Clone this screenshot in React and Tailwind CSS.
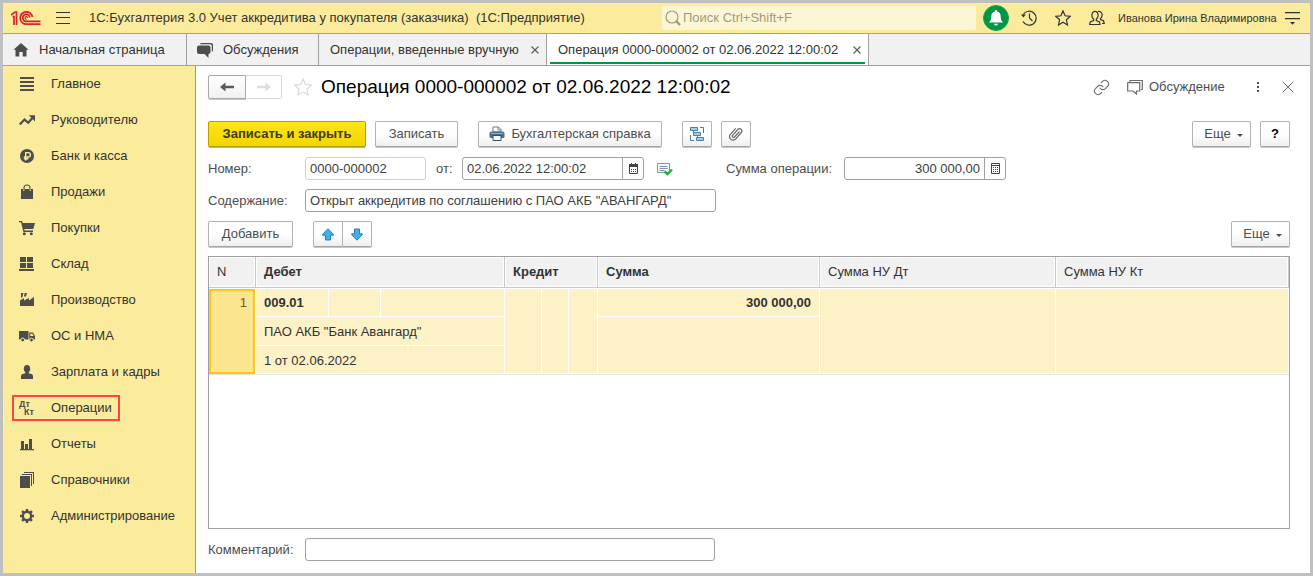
import { Link } from 'lucide-react';

const sections = [
  { name: 'Главное', icon: 'menu' },
  { name: 'Руководителю', icon: 'trend' },
  { name: 'Банк и касса', icon: 'ruble' },
  { name: 'Продажи', icon: 'bag' },
  { name: 'Покупки', icon: 'cart' },
  { name: 'Склад', icon: 'stock' },
  { name: 'Производство', icon: 'factory' },
  { name: 'ОС и НМА', icon: 'truck' },
  { name: 'Зарплата и кадры', icon: 'person' },
  { name: 'Операции', icon: 'dtkt', marked: true },
  { name: 'Отчеты', icon: 'chart' },
  { name: 'Справочники', icon: 'books' },
  { name: 'Администрирование', icon: 'gear' },
];

const gearTeeth = [0, 45, 90, 135, 180, 225, 270, 315];

const sectionIcons = {
  menu: <path d="M1 1h14v2H1zM1 5h14v2H1zM1 9h14v2H1zM1 13h14v2H1z" />,
  trend: (
    <>
      <path d="M.8 12.5 5.5 7.6l3.7 3.2 4-4.6" fill="none" stroke="currentColor" strokeWidth="2.2" />
      <path d="M9.8 3.3H16v6.2z" />
    </>
  ),
  ruble: (
    <>
      <circle cx="8" cy="8" r="7" />
      <path d="M6.7 12.4V4.6h2.5a2.2 2.2 0 0 1 0 4.4H4.8M4.8 10.8h4.6" fill="none" stroke="#faec9c" strokeWidth="1.4" />
    </>
  ),
  bag: (
    <>
      <path d="M2 5h2v2h1.5V5h5v2H12V5h2v10H2z" />
      <path d="M5 6.5V4a3 3 0 0 1 6 0v2.5" fill="none" stroke="currentColor" strokeWidth="1.1" />
    </>
  ),
  cart: (
    <>
      <path d="M0 1h3l.7 2H16l-1.7 6H5.3l.3 1.5H14V12H4.4L2 2.3H0z" />
      <circle cx="5.3" cy="13.7" r="1.5" />
      <circle cx="12.3" cy="13.7" r="1.5" />
    </>
  ),
  stock: <path d="M1 1h6v5H1zM8 1h6v5H8zM1 7h6v5H1zM8 7h6v5H8zM0 13h15v2H0z" />,
  factory: <path d="M1 14V8.5l4-2.500v2.500L10 6v2.500L15 5v9zM2 1h2.400L3.500 5 2 6zM5.600 1H8L7 4.500H5z" />,
  truck: (
    <>
      <path d="M0 3h9.500v8.500H0zM10.200 4.500H14l2 3.500v3.500h-5.800z" />
      <path d="M11.3 5.7h2.2L14.7 8h-3.4z" fill="#faec9c" />
      <circle cx="3.7" cy="12" r="1.9" stroke="#faec9c" />
      <circle cx="12.5" cy="12" r="1.9" stroke="#faec9c" />
    </>
  ),
  person: (
    <>
      <ellipse cx="8" cy="4.8" rx="3.2" ry="3.8" />
      <path d="M6.300 7h3.400v2.300l3.300 1q1 .5 1 2V15H2v-2.700q0-1.500 1-2l3.300-1z" />
    </>
  ),
  dtkt: (
    <g fontFamily="Liberation Sans, sans-serif" fontWeight="700" fontSize="9">
      <text x="0" y="7">Дт</text>
      <text x="5" y="15">Кт</text>
    </g>
  ),
  chart: <path d="M1 13h14v1.200H1zM2 5h3v8H2zM6 8h3v5H6zM10 3h3v10h-3z" />,
  books: <path d="M1 4h10v12H1zM2.800 2H13v12h-1V3H2.800zM5 0h10v12h-1V1H5z" />,
  gear: (
    <>
      <circle cx="8" cy="8" r="4.2" fill="none" stroke="currentColor" strokeWidth="2.4" />
      {gearTeeth.map((angle) => (
        <path key={angle} d="M6.800 1h2.400v2.700H6.800z" transform={`rotate(${angle} 8 8)`} />
      ))}
    </>
  ),
};

const Line = ({ size = 16, className = '', width = 1.2, children }) => (
  <svg
    width={size}
    height={size}
    viewBox="0 0 16 16"
    fill="none"
    stroke="currentColor"
    strokeWidth={width}
    className={`shrink-0 ${className}`}
    aria-hidden="true"
  >
    {children}
  </svg>
);

const starPath = 'M8 .9l2.100 4.900 5.200.5-3.900 3.500 1.100 5.200L8 12.300 3.500 15l1.100-5.200L.7 6.300l5.200-.5z';

const Logo = () => (
  <svg width="30" height="16" viewBox="0 0 30 16" fill="none" stroke="#d8232a" strokeWidth="1.7" className="shrink-0" aria-hidden="true">
    <path d="M0 5l4-3h1.500v13M1.500 6.500H3V15" />
    <path d="M21.500 6.800A6.200 6.200 0 1 0 15.500 14.200H29.500" />
    <path d="M18.800 7.300A3.500 3.500 0 1 0 15.500 11.400H29.500" />
    <path d="M16.600 8a1.300 1.300 0 1 0-1 1.200" strokeWidth="1.2" />
  </svg>
);

const Button = ({ className = '', children, ...rest }) => (
  <button
    className={`mb-px flex h-[26px] items-center justify-center rounded-xs border border-[#b3b3b3] border-b-[#a3a3a3] bg-linear-to-b from-white from-50% to-[#efefef] text-[#4d4d4d] shadow-[0_1px_0_#c8c8c8] ${className}`}
    {...rest}
  >
    {children}
  </button>
);

const MoreButton = () => (
  <Button className="w-[59px] gap-1.5 pl-1">
    Еще
    <svg width="6" height="6" viewBox="0 0 6 6" fill="currentColor" aria-hidden="true">
      <path d="M0 3h6L3 6z" />
    </svg>
  </Button>
);

const TabClose = () => (
  <button aria-label="Закрыть вкладку" className="ml-auto text-[#5a5a5a]">
    <Line size={8} width={2.2}>
      <path d="M1 1l14 14M15 1L1 15" />
    </Line>
  </button>
);

const Header = () => (
  <header className="flex h-[31px] shrink-0 items-center border-b border-[#a0a0a0] bg-[#faec9c] pr-2.5 pl-2 text-[#333]">
    <Logo />
    <button aria-label="Меню" className="ml-[15px]">
      <svg width="14" height="12" viewBox="0 0 14 12" fill="currentColor" aria-hidden="true">
        <path d="M0 0h14v1H0zM0 5h14v1H0zM0 11h14v1H0z" />
      </svg>
    </button>
    <h1 className="ml-[19px] flex-1 truncate text-[13px] whitespace-pre">
      1С:Бухгалтерия 3.0 Учет аккредитива у покупателя (заказчика)  (1С:Предприятие)
    </h1>
    <label className="flex h-6 w-[314px] items-center gap-0.5 rounded-xs bg-[#fdf6d5] px-[3px] text-[#a09a7c]">
      <Line>
        <circle cx="7" cy="7" r="6" />
        <path d="M11 11l4 4" strokeWidth="2.4" />
      </Line>
      <input type="search" aria-label="Поиск" placeholder="Поиск Ctrl+Shift+F" className="min-w-0 flex-1 bg-transparent outline-none placeholder:text-[#a09a7c]" />
    </label>
    <button aria-label="Уведомления" className="ml-[7px] flex size-[26px] items-center justify-center rounded-full border border-[#12a857] bg-[#009646] text-white">
      <svg width="18" height="18" viewBox="0 0 16 16" fill="currentColor" aria-hidden="true">
        <path d="M7 1h2v1.300c2.300.5 3.200 2.200 3.200 4.500 0 2.700.8 3.800 2.300 5.200H1.500C3 10.600 3.800 9.500 3.800 6.800c0-2.300.9-4 3.200-4.500zM6.300 13h3.400a1.700 1.700 0 0 1-3.400 0z" />
      </svg>
    </button>
    <button aria-label="История" className="ml-3">
      <Line>
        <path d="M2.200 4.500A7 7 0 1 1 2 11.500M8.500 3.500V8l3 3" />
        <path d="M0 4.500h5L2.300 7.500z" fill="currentColor" stroke="none" />
      </Line>
    </button>
    <button aria-label="Избранное" className="ml-[18px]">
      <Line>
        <path d={starPath} />
      </Line>
    </button>
    <button aria-label="Пользователи" className="ml-[18px]">
      <Line>
        <path d="M4.700 9.300C1.500 6.500 3 1.300 6 1.300S10.500 6.500 7.300 9.300v1.200l3.200 1.500.5 2.500H.7l.5-2.500 3.500-1.500zM9 1.500c4-1 5.500 4.500 2.500 7v1l3 1.300.7 2.700H13" />
      </Line>
    </button>
    <span className="ml-[13px] w-[155px] text-[11px] whitespace-nowrap">Иванова Ирина Владимировна</span>
    <button aria-label="Сервис" className="ml-3">
      <svg width="15" height="13" viewBox="0 0 15 13" fill="currentColor" aria-hidden="true">
        <path d="M0 0h15v1.200H0zM0 6h15v1.200H0zM5 10h5l-2.500 2.700z" />
      </svg>
    </button>
  </header>
);

const Tabs = () => (
  <nav className="flex h-8 shrink-0 border-b border-[#a0a0a0] bg-[#f1f1f1] whitespace-nowrap text-[#333]">
    <a href="#home" className="flex w-[184px] items-center gap-2.5 border-r border-[#a0a0a0] pl-2.5">
      <svg width="16" height="14" viewBox="0 0 16 14" fill="#4d4d4d" aria-hidden="true">
        <path d="M8 0l7.500 6.700H13.500V13.500H9.700V9H6.300v4.500H2.500V6.700H.5z" />
      </svg>
      Начальная страница
    </a>
    <a href="#talks" className="flex w-[132px] items-center gap-2.5 border-r border-[#a0a0a0] pl-2.5">
      <svg width="16" height="16" viewBox="0 0 16 16" fill="#4d4d4d" aria-hidden="true">
        <path d="M4.500 1h9.500q2 0 2 2v5q0 1.500-1.200 2V4q0-1.800-1.800-1.800H3Q3.200 1 4.500 1zM2 3.400h9.500q2 0 2 2v4.600q0 2-2 2V16L7.500 12H2q-2 0-2-2V5.400q0-2 2-2z" />
      </svg>
      Обсуждения
    </a>
    <div className="flex w-[228px] items-center border-r border-[#a0a0a0] pr-[7px] pl-[11px]">
      <a href="#operations">Операции, введенные вручную</a>
      <TabClose />
    </div>
    <div className="w-[322px] border-r border-[#a0a0a0] bg-white px-[3px]">
      <div className="flex h-[30px] items-center border-b-2 border-[#009646] pt-[3px] pr-1 pl-2">
        <a href="#operation" aria-current="page">Операция 0000-000002 от 02.06.2022 12:00:02</a>
        <TabClose />
      </div>
    </div>
  </nav>
);

const Sidebar = () => (
  <aside className="w-[193px] shrink-0 border-r border-[#a39a66] bg-[#faec9c] text-[#333]">
    <ul>
      {sections.map(({ name, icon, marked }) => (
        <li key={name} className="flex h-9 items-center pl-[9px]">
          <a
            href={`#${icon}`}
            className={`flex h-[26px] items-center gap-4 border-2 pr-1.5 pl-[5px] whitespace-nowrap ${marked ? 'border-[#ff4242]' : 'border-transparent'}`}
          >
            <svg width="16" height="16" viewBox="0 0 16 16" fill="currentColor" className="shrink-0 text-[#4d4d4d]" aria-hidden="true">
              {sectionIcons[icon]}
            </svg>
            {name}
          </a>
        </li>
      ))}
    </ul>
  </aside>
);

const TitleRow = () => (
  <div className="-mr-1 flex h-6 items-center">
    <div className="flex">
      <button aria-label="Назад" className="flex h-6 w-[38px] items-center justify-center rounded-l-xs border border-[#a8a8a8] bg-linear-to-b from-white to-[#f1f1f1] shadow-[0_1px_0_#c8c8c8]">
        <svg width="14" height="12" viewBox="0 0 14 12" fill="#595959" aria-hidden="true">
          <path d="M0 6l5.500-4.500v3.300H14v2.400H5.500v3.300z" />
        </svg>
      </button>
      <button aria-label="Вперед" disabled className="flex h-6 w-9 items-center justify-center rounded-r-xs border border-l-0 border-[#d9d9d9] bg-white">
        <svg width="14" height="12" viewBox="0 0 14 12" fill="#dedede" aria-hidden="true">
          <path d="M14 6L8.500 1.500v3.300H0v2.400h8.500v3.300z" />
        </svg>
      </button>
    </div>
    <button aria-label="В избранное" className="ml-3 text-[#d9d9d9]">
      <Line size={18} width={1}>
        <path d={starPath} />
      </Line>
    </button>
    <h2 className="ml-[9px] text-[19px] whitespace-nowrap text-black">Операция 0000-000002 от 02.06.2022 12:00:02</h2>
    <button aria-label="Получить ссылку" className="ml-auto text-[#6b6b6b]">
      <Link size={17} strokeWidth={1.5} />
    </button>
    <button className="ml-[17px] flex items-center gap-1.5 text-[#4d4d4d]">
      <Line className="text-[#6b6b6b]">
        <path d="M3 3V1.500h12.300v9H14M.7 3.700h12V12H9.500v3L6 12H.7z" />
      </Line>
      <span className="w-[78px] text-left">Обсуждение</span>
    </button>
    <button aria-label="Еще действия" className="ml-[29px] text-[#4d4d4d]">
      <svg width="4" height="12" viewBox="0 0 4 12" fill="currentColor" aria-hidden="true">
        <path d="M1 1h2v2H1zM1 5h2v2H1zM1 9h2v2H1z" />
      </svg>
    </button>
    <button aria-label="Закрыть" className="ml-[22px] text-[#6b6b6b]">
      <Line size={12} width={1.3}>
        <path d="M1 1l14 14M15 1L1 15" />
      </Line>
    </button>
  </div>
);

const Toolbar = () => (
  <div className="mt-[22px] flex">
    <button className="mb-px h-[26px] w-[158px] rounded-xs border border-[#b5a100] bg-linear-to-b from-[#ffe417] to-[#f3d500] font-bold text-[#3d3a2a] shadow-[0_1px_0_#c9b94a]">
      Записать и закрыть
    </button>
    <Button className="ml-[9px] w-[83px]">Записать</Button>
    <Button className="ml-5 w-[184px] gap-1.5">
      <svg width="16" height="16" viewBox="0 0 16 16" aria-hidden="true">
        <path d="M4 6V1h5.500L12 3.500V6z" fill="#fff" stroke="#6d7f8f" />
        <path d="M9 1v3h3" fill="none" stroke="#6d7f8f" />
        <path d="M2.500 5.500h11q2 0 2 2v3q0 1.500-1.500 1.500H2q-1.500 0-1.500-1.500v-3q0-2 2-2z" fill="#456f94" />
        <path d="M2 7.500h12" stroke="#8fb0cb" />
        <path d="M4 9.500h8v5H4z" fill="#fff" stroke="#2f536f" />
      </svg>
      Бухгалтерская справка
    </Button>
    <Button aria-label="Структура подчиненности" className="ml-5 w-[30px]">
      <svg width="16" height="16" viewBox="0 0 16 16" fill="none" aria-hidden="true">
        <path d="M11 1.500h3.500V7M1.500 9v5.500H5M4.500 5v3H6M8.500 10v3" stroke="#4a80a3" />
        <path d="M1.500 1.500h7v3h-7zM4.500 6.500h7v3h-7zM7.500 11.500h7v3h-7z" fill="#a9cbe0" stroke="#4a80a3" />
      </svg>
    </Button>
    <Button aria-label="Присоединенные файлы" className="ml-[9px] w-[30px]">
      <Line width={1.2} className="text-[#6b6b6b]">
        <path d="M11.500 5.500L6.500 11a1.200 1.200 0 0 1-1.900-1.600l5.200-5.900a2.300 2.300 0 0 1 3.500 3l-6 6.800a3.500 3.500 0 0 1-5-4.800l5.400-6.200" />
      </Line>
    </Button>
    <div className="ml-auto flex gap-[9px]">
      <MoreButton />
      <Button className="w-[30px] font-bold text-black">?</Button>
    </div>
  </div>
);

const inputBase = 'h-[23px] rounded-[3px] border bg-white px-1 text-[#404040] outline-none';

const Fields = () => (
  <>
    <div className="mt-[9px] flex items-center">
      <label htmlFor="number" className="w-[97px]">Номер:</label>
      <input id="number" defaultValue="0000-000002" className={`${inputBase} w-[121px] border-[#cfcfcf]`} />
      <label htmlFor="date" className="w-9 pl-2.5">от:</label>
      <div className="flex h-[23px] w-[182px] rounded-[3px] border border-[#a0a0a0]">
        <input id="date" defaultValue="02.06.2022 12:00:02" className="min-w-0 flex-1 px-1 text-[#404040] outline-none" />
        <button aria-label="Выбрать дату" className="flex w-[21px] items-center justify-center border-l border-[#a0a0a0]">
          <svg width="9" height="11" viewBox="0 0 9 11" aria-hidden="true">
            <path d="M.5 1.500h8v9h-8z" fill="#fff" stroke="#444" />
            <path d="M0 1h9v3H0zM2 0h1v2H2zM6 0h1v2H6z" fill="#444" />
            <path d="M2 6.500h5M2 8.500h5" stroke="#444" strokeDasharray="1 1" />
          </svg>
        </button>
      </div>
      <svg width="16" height="14" viewBox="0 0 16 14" fill="none" className="ml-[13px]" aria-hidden="true">
        <path d="M.5 1.500h12v9H.5z" fill="#f5f8fb" stroke="#8096ab" />
        <path d="M2.500 4.500h8M2.500 6.500h8M2.500 8.500h5" stroke="#8096ab" />
        <path d="M7.500 9.500l3 2.700L15 7.500" stroke="#22b033" strokeWidth="2.4" />
      </svg>
      <label htmlFor="sum" className="ml-[53px] w-[118px]">Сумма операции:</label>
      <div className="flex h-[23px] w-[162px] rounded-[3px] border border-[#a0a0a0]">
        <input id="sum" defaultValue="300 000,00" className="min-w-0 flex-1 px-1 text-right text-[#404040] outline-none" />
        <button aria-label="Калькулятор" className="flex w-[21px] items-center justify-center border-l border-[#a0a0a0]">
          <svg width="9" height="11" viewBox="0 0 9 11" fill="none" stroke="#444" aria-hidden="true">
            <path d="M.5.5h8v10h-8zM1 2.500h7" />
            <path d="M2 4.500h5M2 6.500h5M2 8.500h5" strokeDasharray="1 1" />
          </svg>
        </button>
      </div>
    </div>
    <div className="mt-[9px] flex items-center">
      <label htmlFor="content" className="w-[97px]">Содержание:</label>
      <input id="content" defaultValue={'Открыт аккредитив по соглашению с ПАО АКБ "АВАНГАРД"'} className={`${inputBase} w-[411px] border-[#a0a0a0]`} />
    </div>
  </>
);

const ArrowIcon = ({ down }) => (
  <svg width="12" height="13" viewBox="0 0 12 13" className={down ? 'rotate-180' : ''} aria-hidden="true">
    <path d="M6 .8l5.300 5.400v1H8.500V12h-5V7.200H.7v-1z" fill="#3fb0ee" stroke="#2a7fb5" />
  </svg>
);

const RowsToolbar = () => (
  <div className="mt-[9px] flex">
    <Button className="w-[85px]">Добавить</Button>
    <div className="ml-5 flex">
      <Button aria-label="Переместить вверх" className="w-[30px] rounded-r-none">
        <ArrowIcon />
      </Button>
      <Button aria-label="Переместить вниз" className="w-[29px] rounded-l-none border-l-0">
        <ArrowIcon down />
      </Button>
    </div>
    <div className="ml-auto">
      <MoreButton />
    </div>
  </div>
);

const th = 'h-[31px] border-r border-b border-[#c9c9c9] bg-[#f1f1f1] px-2 text-left shadow-[inset_0_0_0_1px_#fff]';
const td = 'border-r border-b border-white px-2 pt-0.5';
const tdTop = 'border-t border-r border-b border-white px-2';

const Entries = () => (
  <div className="mt-2 flex-1 border border-[#a0a0a0]">
    <table className="w-full table-fixed border-separate border-spacing-0 text-[#333]">
      <colgroup>
        <col className="w-[47px]" />
        <col className="w-[73px]" />
        <col className="w-[52px]" />
        <col className="w-[124px]" />
        <col className="w-[37px]" />
        <col className="w-[27px]" />
        <col className="w-[29px]" />
        <col className="w-[222px]" />
        <col className="w-[236px]" />
        <col />
      </colgroup>
      <thead>
        <tr>
          <th className={`${th} font-normal`}>N</th>
          <th colSpan={3} className={`${th} font-bold`}>Дебет</th>
          <th colSpan={3} className={`${th} font-bold`}>Кредит</th>
          <th className={`${th} font-bold`}>Сумма</th>
          <th className={`${th} font-normal`}>Сумма НУ Дт</th>
          <th className={`${th} font-normal`}>Сумма НУ Кт</th>
        </tr>
      </thead>
      <tbody className="bg-[#fdf2c6]">
        <tr className="h-[29px]">
          <td rowSpan={3} className="border-t border-r border-white bg-[#fbe58f] px-2 pt-1.5 text-right align-top text-[#6b5a2a] shadow-[inset_0_0_0_2px_#fbc61d]">1</td>
          <td className={`${tdTop} font-bold`}>009.01</td>
          <td className={tdTop}></td>
          <td className={tdTop}></td>
          <td rowSpan={3} className={tdTop}></td>
          <td rowSpan={3} className={tdTop}></td>
          <td rowSpan={3} className={tdTop}></td>
          <td className={`${tdTop} text-right font-bold`}>300 000,00</td>
          <td rowSpan={3} className={tdTop}></td>
          <td rowSpan={3} className={tdTop}></td>
        </tr>
        <tr className="h-[29px]">
          <td colSpan={3} className={td}>ПАО АКБ "Банк Авангард"</td>
          <td rowSpan={2} className={td}></td>
        </tr>
        <tr className="h-7">
          <td colSpan={3} className={td}>1 от 02.06.2022</td>
        </tr>
      </tbody>
    </table>
    <div className="border-t border-[#e3e3e3]"></div>
  </div>
);

export default function App() {
  return (
    <div className="flex min-h-screen flex-col border-3 border-[#c0c0c0] bg-white font-['Liberation_Sans',Arial,sans-serif] text-[13px] leading-4 text-[#4d4d4d]">
      <Header />
      <Tabs />
      <div className="flex flex-1">
        <Sidebar />
        <main className="flex min-w-0 flex-1 flex-col pt-[9px] pr-5 pb-3 pl-3">
          <TitleRow />
          <Toolbar />
          <Fields />
          <RowsToolbar />
          <Entries />
          <div className="mt-[9px] flex items-center">
            <label htmlFor="comment" className="w-[97px]">Комментарий:</label>
            <input id="comment" className={`${inputBase} w-[410px] border-[#a0a0a0]`} />
          </div>
        </main>
      </div>
    </div>
  );
}
